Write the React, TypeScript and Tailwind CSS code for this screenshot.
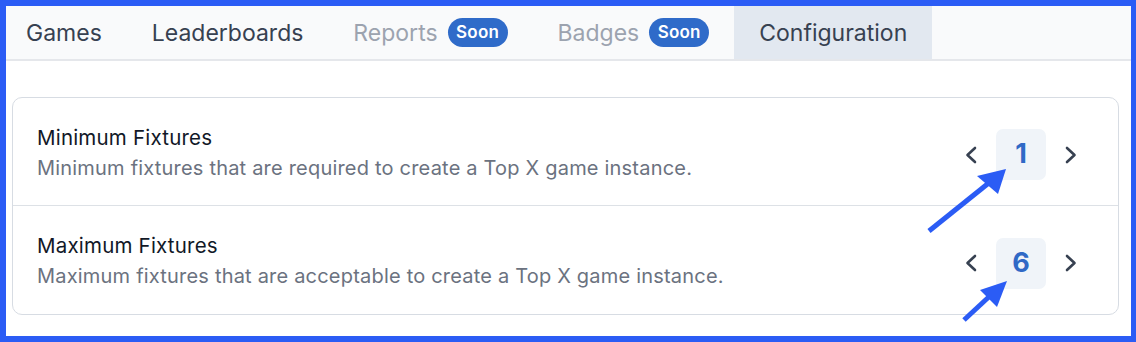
import React from "react";

const font = { fontFamily: "Inter, 'Noto Sans', sans-serif" };

function ChevronLeft() {
  return (
    <svg width="12" height="18" viewBox="0 0 12 18" fill="none">
      <polyline points="10,2 2.5,9 10,16" stroke="#374151" strokeWidth="2.6" strokeLinecap="round" strokeLinejoin="round" />
    </svg>
  );
}
function ChevronRight() {
  return (
    <svg width="12" height="18" viewBox="0 0 12 18" fill="none">
      <polyline points="2,2 9.5,9 2,16" stroke="#374151" strokeWidth="2.6" strokeLinecap="round" strokeLinejoin="round" />
    </svg>
  );
}

function Badge() {
  return (
    <span className="ml-[10px] inline-flex h-[29px] items-center rounded-full bg-[#2f6bc9] px-[8.5px] text-[17px] font-semibold tracking-[0.2px] text-white">
      Soon
    </span>
  );
}

function Row({ title, desc, value, last }: { title: string; desc: string; value: string; last?: boolean }) {
  return (
    <div className={`flex h-[108px] items-center justify-between pl-[24px] pr-[41px] ${last ? "" : "border-b border-[#dde1e6]"}`}>
      <div className="mt-[2px] flex flex-col tracking-[0.2px]">
        <div className="text-[20.5px] leading-[30px] text-[#111827]">{title}</div>
        <div className="text-[20px] leading-[30px] text-[#6b7280]">{desc}</div>
      </div>
      <div className="mt-[6px] flex items-center gap-[19px]">
        <ChevronLeft />
        <div className="flex h-[51px] w-[50px] items-center justify-center rounded-[7px] bg-[#f0f4f9] text-[27px] font-bold text-[#3069c6]">
          {value}
        </div>
        <ChevronRight />
      </div>
    </div>
  );
}

export default function App() {
  return (
    <div className="relative h-[342px] w-[1136px] bg-[#2b5cf5] pb-[6px] pl-[6px] pr-[5px] pt-[6px]" style={font}>
      <div className="flex h-full flex-col bg-white">
        <div className="flex h-[55px] items-stretch border-b-2 border-[#e5e7eb] bg-[#f9fafb] text-[23px]">
          <div className="flex items-center pl-[20px] pr-[25px] pt-[2px] text-[#374151]">Games</div>
          <div className="flex items-center px-[25px] pt-[2px] text-[#374151]">Leaderboards</div>
          <div className="flex items-center px-[25px] text-[#9ca3af]">
            <span className="pt-[2px]">Reports</span>
            <Badge />
          </div>
          <div className="flex items-center px-[25px] text-[#9ca3af]">
            <span className="pt-[2px]">Badges</span>
            <Badge />
          </div>
          <div className="flex items-center bg-[#e2e8f0] px-[25px] pt-[2px] text-[#374151]">Configuration</div>
        </div>
        <div className="ml-[6px] mr-[12px] mt-[36px] rounded-[10px] border border-[#d7dce3]">
          <Row title="Minimum Fixtures" desc="Minimum fixtures that are required to create a Top X game instance." value="1" />
          <Row title="Maximum Fixtures" desc="Maximum fixtures that are acceptable to create a Top X game instance." value="6" last />
        </div>
      </div>
      <svg className="pointer-events-none absolute left-0 top-0" width="1136" height="342" viewBox="0 0 1136 342">
        <line x1="929" y1="231" x2="990" y2="182" stroke="#2b5cf5" strokeWidth="5" />
        <polygon points="1006,169 977,176 998,194" fill="#2b5cf5" />
        <line x1="964" y1="320" x2="992" y2="294" stroke="#2b5cf5" strokeWidth="5" />
        <polygon points="1007,281 980,290 997,307" fill="#2b5cf5" />
      </svg>
    </div>
  );
}
